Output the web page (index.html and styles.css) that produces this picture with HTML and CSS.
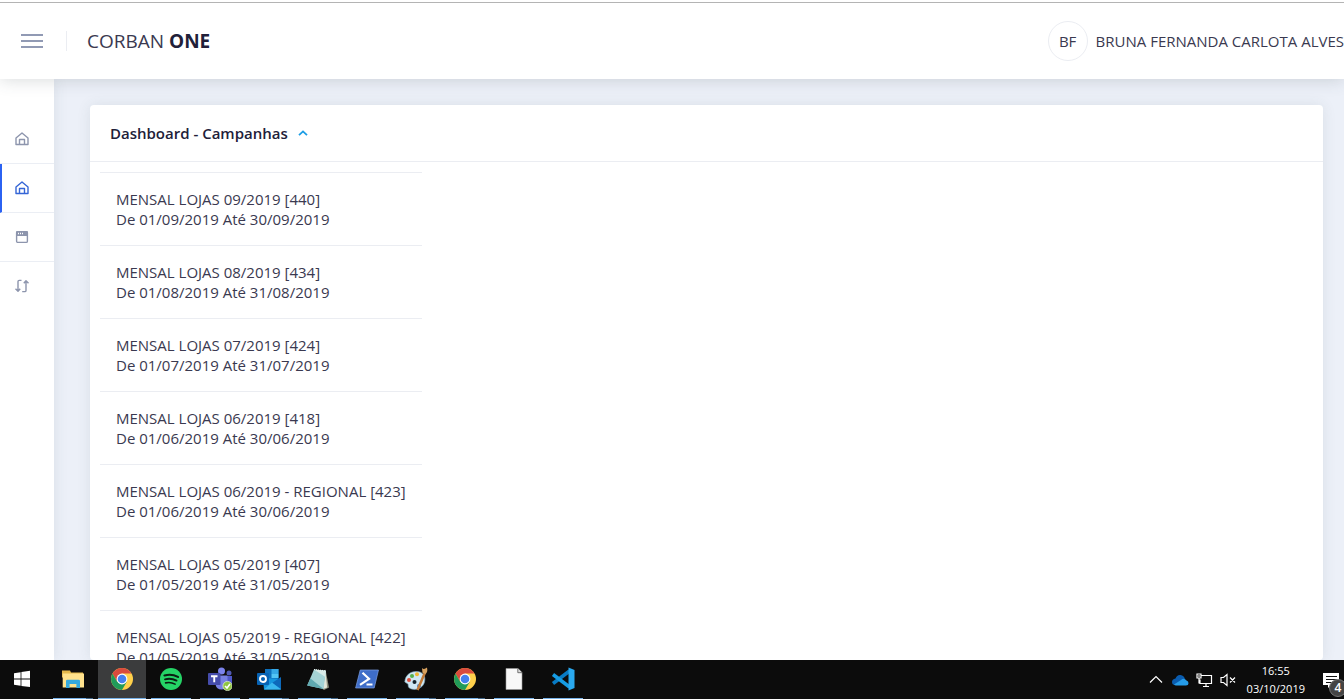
FILE: index.html
```html
<!DOCTYPE html>
<html lang="pt-BR">
<head>
<meta charset="utf-8">
<title>Corban One</title>
<link rel="stylesheet" href="styles.css">
</head>
<body>
<div class="screen">
  <header class="topbar">
    <button class="menu-button" aria-label="Menu"><span></span><span></span><span></span></button>
    <a class="brand" href="#">CORBAN <b>ONE</b></a>
    <div class="user"><span class="avatar">BF</span><span class="user-name">BRUNA FERNANDA CARLOTA ALVES</span></div>
  </header>

  <div class="workspace">
    <nav class="sidebar" aria-label="Principal">
      <a class="side-link" href="#" aria-label="Início">
        <svg viewBox="0 0 14 14"><path d="M1 12.500V6L7 1l6 5v6.500zM4.500 12.500V7.500h5v5"/></svg>
      </a>
      <a class="side-link active" href="#" aria-label="Dashboard">
        <svg viewBox="0 0 14 14"><path d="M1 12.500V6L7 1l6 5v6.500zM4.500 12.500V7.500h5v5"/></svg>
      </a>
      <a class="side-link" href="#" aria-label="Janela">
        <svg viewBox="0 0 14 14"><rect x="1.600" y="1.600" width="10.800" height="10.800" rx="1.200"/><path class="solid" d="M1 2.200Q1 1 2.200 1h9.600Q13 1 13 2.200V6H1z"/><path class="dots" d="M3 3.500h1M5 3.500h1M7 3.500h1"/></svg>
      </a>
      <a class="side-link" href="#" aria-label="Transferências">
        <svg viewBox="0 0 14 14"><path d="M6.500 1.400H4.200Q3 1.400 3 2.600V12M.5 9.800 3 12.300l2.200-2.500M7.200 12.600h2.600q1.200 0 1.200-1.200V2M8.800 4.200 11 1.700l2.500 2.500"/></svg>
      </a>
    </nav>

    <main class="content">
      <section class="card">
        <h1 class="card-title">Dashboard - Campanhas
          <button class="collapse" aria-label="Recolher"><svg viewBox="0 0 10 6"><path d="M1 5.200 5 1.400l4 3.800"/></svg></button>
        </h1>
        <ul class="campaigns">
          <li>MENSAL LOJAS 09/2019 [440]<br>De 01/09/2019 Até 30/09/2019</li>
          <li>MENSAL LOJAS 08/2019 [434]<br>De 01/08/2019 Até 31/08/2019</li>
          <li>MENSAL LOJAS 07/2019 [424]<br>De 01/07/2019 Até 31/07/2019</li>
          <li>MENSAL LOJAS 06/2019 [418]<br>De 01/06/2019 Até 30/06/2019</li>
          <li>MENSAL LOJAS 06/2019 - REGIONAL [423]<br>De 01/06/2019 Até 30/06/2019</li>
          <li>MENSAL LOJAS 05/2019 [407]<br>De 01/05/2019 Até 31/05/2019</li>
          <li>MENSAL LOJAS 05/2019 - REGIONAL [422]<br>De 01/05/2019 Até 31/05/2019</li>
        </ul>
      </section>
    </main>
  </div>

  <footer class="taskbar">
    <div class="apps">
      <button class="app start" aria-label="Iniciar"><svg viewBox="0 0 24 24"><path fill="#fff" d="M4 6.200 10.600 5.200v6.300H4zM11.400 5 20 3.800v7.700h-8.600zM4 12.400h6.600v6.400L4 17.800zM11.400 12.400H20V20l-8.600-1.100z"/></svg></button>
      <button class="app open stacked" aria-label="Explorador de Arquivos"><svg viewBox="0 0 24 24"><path fill="#e5b94c" d="M1 3.500h8l1 2h12v5H1z"/><path fill="#ffe28d" d="M1.700 6.500H23v14H1.700z"/><path fill="#36a9dd" d="M5 21v-7q0-1.300 1.300-1.300h11.400q1.300 0 1.300 1.300v7h-3.600v-4H8.600v4z"/></svg></button>
      <button class="app open current" aria-label="Chrome"><svg viewBox="0 0 24 24"><circle cx="12" cy="12" r="11" fill="#ffd04b"/><path fill="#d94b3d" d="M2.500 6.500A11 11 0 0 1 21.500 6.500H12L7.200 14.700z"/><path fill="#219b59" d="M2.500 6.500A11 11 0 0 0 12 23l4.800-8.200H7.200z"/><circle cx="12" cy="12" r="5.400" fill="#fff"/><circle cx="12" cy="12" r="4.300" fill="#4580ee"/></svg></button>
      <button class="app open" aria-label="Spotify"><svg viewBox="0 0 24 24"><circle cx="12" cy="12" r="11" fill="#25d366"/><path fill="none" stroke="#0b1d12" stroke-linecap="round" stroke-width="2.200" d="M5.500 8.500q7-2 13.500 1.400"/><path fill="none" stroke="#0b1d12" stroke-linecap="round" stroke-width="1.900" d="M6 12.300q6-1.600 11.500 1.300"/><path fill="none" stroke="#0b1d12" stroke-linecap="round" stroke-width="1.600" d="M6.600 15.900q5-1.200 9.500 1.200"/></svg></button>
      <button class="app open" aria-label="Teams"><svg viewBox="0 0 24 24"><circle cx="21" cy="6" r="2.500" fill="#5159b5"/><circle cx="13.500" cy="4" r="3.500" fill="#7b83eb"/><path fill="#5059c9" d="M16 9h8.500v7q-2 4-6 3z"/><path fill="#7780e3" d="M8 8.500h11.500v8q-1 6-6 6t-6-5z"/><rect y="6" width="12.500" height="12" rx="1" fill="#454cab"/><path fill="none" stroke="#fff" stroke-width="1.900" d="M3 9.300h6.500M6.250 9.300v6"/><circle cx="19.500" cy="19" r="4.600" fill="#8fc541" stroke="#e7f4d4" stroke-width=".7"/><path fill="none" stroke="#fff" stroke-width="1.600" d="m17 19 2 2 3-4"/></svg></button>
      <button class="app open stacked" aria-label="Outlook"><svg viewBox="0 0 24 24"><path fill="#0c70bd" d="M8 2h13.500v11H8z"/><path fill="#36a9e6" d="M14.500 2h7v5h-7z"/><path fill="#52c5f5" d="M14.500 7h7v4h-7z"/><path fill="#1495df" d="m6 11 18 1v10.500H7z"/><path fill="#0d69bb" d="m15 16 9-6v12z"/><path fill="#39b7ef" d="m7 22.500 8-7 9 7z"/><rect y="6" width="12" height="12" rx="1" fill="#0763b4"/><circle cx="6" cy="12" r="3" fill="none" stroke="#fff" stroke-width="1.900"/></svg></button>
      <button class="app open stacked" aria-label="Bloco de notas"><svg viewBox="0 0 24 24"><path fill="#8d8e7a" d="m19.500 2.500 3.500 18-5 2.500-3-2z"/><path fill="#e3e6d8" d="m19.500 3.500 1.600 17-4 1.500z"/><path fill="#a4d3d5" d="M8 2.500 20 3.800 17.500 22 1.200 18.500z"/><path fill="#5fa9b1" d="m4.500 11.500 13 10.500L1.200 18.500z"/><path fill="#d9ebe7" d="m8 2.500 12 1.300-1 6z"/><path stroke="#edf5f2" stroke-dasharray="1 1" d="M8 2.500 20 3.800"/></svg></button>
      <button class="app open" aria-label="PowerShell"><svg viewBox="0 0 24 24"><path fill="#3e6dc9" stroke="#7c9fe2" stroke-width=".7" d="M5.200 3h18.300L19.200 21H.6z"/><path fill="none" stroke="#fff" stroke-width="2.200" d="m7.500 5.800 6.500 6-9 6M11.500 17.500h6"/></svg></button>
      <button class="app open stacked" aria-label="Paint"><svg viewBox="0 0 24 24"><path fill="#cfe7f2" stroke="#7fa6bb" stroke-width=".6" d="M.8 15C1 8 7 4 13 4.500c6 .5 9 4.500 7.500 10.500-1.500 6-8 8.500-13 7-4-1-3-3.500-3.500-5z"/><circle cx="5" cy="13" r="2" fill="#df4d3e"/><circle cx="8" cy="9" r="2" fill="#55b04b"/><circle cx="13" cy="7.300" r="2" fill="#efb633"/><circle cx="10.500" cy="15" r="2" fill="#14242d"/><circle cx="15" cy="19" r="2" fill="#4481c8"/><path stroke="#c27a37" stroke-width="2.500" d="m13.500 23 7.300-17"/><path fill="#d6a15f" d="M18 1q2 2 5-.5Q24 5 21.600 7L18.500 6z"/></svg></button>
      <button class="app open stacked" aria-label="Chrome"><svg viewBox="0 0 24 24"><circle cx="12" cy="12" r="11" fill="#ffd04b"/><path fill="#d94b3d" d="M2.500 6.500A11 11 0 0 1 21.500 6.500H12L7.200 14.700z"/><path fill="#219b59" d="M2.500 6.500A11 11 0 0 0 12 23l4.800-8.200H7.200z"/><circle cx="12" cy="12" r="5.400" fill="#fff"/><circle cx="12" cy="12" r="4.300" fill="#4580ee"/></svg></button>
      <button class="app open" aria-label="Documento"><svg viewBox="0 0 24 24"><path fill="#f8f8f8" stroke="#9c9c9c" stroke-width=".6" d="M4 1.500h12l4 4v17H4z"/><path fill="#ddd" stroke="#555" stroke-width=".8" d="M15.800 1.500v4.200H20"/></svg></button>
      <button class="app open" aria-label="Visual Studio Code"><svg viewBox="0 0 24 24"><path fill="none" stroke="#087bc5" stroke-width="3.600" stroke-linejoin="round" d="M18.500 4 2 16.500"/><path fill="none" stroke="#169ce4" stroke-width="3.600" stroke-linejoin="round" d="M2 7.500 18.500 20"/><path fill="#2aa9ef" d="m17.500.5 6 2.500v18l-6 2.500z"/></svg></button>
    </div>
    <div class="tray">
      <button class="tray-icon" aria-label="Mostrar ícones ocultos"><svg viewBox="0 0 18 18"><path d="m3 11.500 6-6 6 6"/></svg></button>
      <button class="tray-icon" aria-label="OneDrive"><svg viewBox="0 0 18 18"><path fill="#0a5caf" stroke="none" d="M1 11q0-3 3.500-3.500Q6 3.500 9.500 4t4.500 4l-7 6H4q-3 0-3-3z"/><path fill="#259be8" stroke="none" d="M3 13.500 10 9q3-2.500 5.500.5 2 .5 2 2.700T15 14.500H5q-1.200 0-2-1z"/></svg></button>
      <button class="tray-icon" aria-label="Rede"><svg viewBox="0 0 18 18"><path d="M6.500 4.500h10v8H5v-4M8 15.500h6M11 12.500v3M2 3h4v4H2zM4 7v5.500M3 5h2"/></svg></button>
      <button class="tray-icon" aria-label="Som desativado"><svg viewBox="0 0 18 18"><path d="M2 6.500h2.500l3.500-3v11l-3.500-3H2zM11 6.500l5 5M16 6.500l-5 5"/></svg></button>
      <time class="clock" datetime="2019-10-03T16:55"><span>16:55</span><span>03/10/2019</span></time>
      <button class="notifications" aria-label="4 notificações"><svg viewBox="0 0 17 16"><path fill="#fff" d="M1 1h16v12H9l-3 3v-3H1z"/><path stroke="#111" d="M4 4.500h11M4 7.500h11M4 10.500h7"/></svg><span class="badge">4</span></button>
    </div>
  </footer>
</div>
</body>
</html>
```
FILE: styles.css
```css
* { box-sizing: border-box; }
body {
  margin: 0;
  overflow: hidden;
  font: 400 15px/20px "Open Sans", sans-serif;
  color: #3a3950;
}
button { padding: 0; border: 0; background: none; font: inherit; }
a { color: inherit; text-decoration: none; }
svg { display: block; fill: none; }
.screen {
  display: flex;
  flex-direction: column;
  height: 100vh;
  padding-top: 2px;
  background: #ecf0f8;
}

.topbar {
  display: flex;
  align-items: center;
  flex: none;
  height: 77px;
  padding-left: 21px;
  border-top: 1px solid #b4b4b4;
  background: #fff;
  box-shadow: 0 -2px 0 #fff, 0 1px 16px rgba(60, 75, 80, .2);
  z-index: 2;
}
.menu-button { display: grid; gap: 4px; width: 22px; }
.menu-button span { height: 2px; background: #919ab4; }
.brand {
  margin-left: 23px;
  padding-left: 20px;
  border-left: 1px solid #ebedf2;
  font-size: 19px;
}
.brand b { font-weight: 700; color: #212039; }
.user { display: flex; align-items: center; gap: 8px; margin-left: auto; white-space: nowrap; }
.avatar {
  display: grid;
  place-items: center;
  width: 40px;
  height: 40px;
  border: 1px solid #ebedf2;
  border-radius: 50%;
}

.workspace { display: flex; flex: 1; min-height: 0; }
.sidebar {
  flex: none;
  width: 54px;
  padding-top: 36px;
  background: #fff;
  box-shadow: 0 0 14px rgba(60, 75, 80, .1);
}
.side-link {
  display: flex;
  align-items: center;
  height: 49px;
  padding-left: 15px;
  border-bottom: 1px solid #ebeef4;
  color: #8d95ad;
}
.side-link.active { padding-left: 13px; border-left: 2px solid #2b62f2; color: #3565d6; }
.side-link:last-child { border-bottom-color: transparent; }
.side-link svg { width: 14px; height: 14px; stroke: currentColor; stroke-width: 1.4; stroke-linejoin: round; }
.side-link .solid { fill: currentColor; stroke: none; }
.side-link .dots { stroke: #fff; }

.content { display: flex; flex: 1; min-width: 0; padding: 26px 21px 0 36px; overflow: hidden; }
.card { flex: 1; background: #fff; border-radius: 4px; box-shadow: 0 0 14px rgba(60, 75, 80, .1); }
.card-title {
  display: flex;
  align-items: center;
  gap: 10px;
  height: 57px;
  margin: 0;
  padding: 0 20px;
  border-bottom: 1px solid #ebedf2;
  color: #212039;
  font-size: 15px;
  font-weight: 600;
}
.collapse svg { width: 10px; height: 6px; stroke: #1c9de5; stroke-width: 1.8; }
.campaigns { width: fit-content; margin: 10px; padding: 0; list-style: none; }
.campaigns li { padding: 16px; border-top: 1px solid #ebedf2; white-space: nowrap; }

.taskbar {
  display: flex;
  justify-content: space-between;
  flex: none;
  height: 39px;
  background: #0c0c0c;
  color: #fff;
  z-index: 3;
}
.apps { display: flex; }
.app {
  display: grid;
  place-items: center;
  width: 40px;
  margin-right: 9px;
  border-bottom: 1px solid transparent;
}
.app svg { width: 24px; height: 24px; }
.app.start { width: 44px; }
.app.open { border-bottom-color: #76b1e8; }
.app.stacked { border-image: linear-gradient(to right, #76b1e8 80%, #42678a 80%) 1; }
.app.current { width: 48px; margin: 0 5px 0 -4px; background: #3b3c3d; }
.tray { display: flex; align-items: center; gap: 6px; }
.tray-icon svg { width: 18px; height: 18px; stroke: #fff; stroke-width: 1.2; }
.clock {
  display: grid;
  margin-left: 4px;
  font-size: 11px;
  line-height: 18px;
  text-align: center;
}
.notifications { position: relative; width: 22px; height: 39px; margin-left: 11px; overflow: hidden; }
.notifications svg { width: 17px; height: 16px; }
.badge {
  position: absolute;
  left: 7px;
  top: 19px;
  width: 18px;
  height: 18px;
  border: 1px solid #777;
  border-radius: 50%;
  background: #444;
  color: #fff;
  font-size: 12px;
  font-weight: 600;
  line-height: 16px;
  text-align: center;
}
```
